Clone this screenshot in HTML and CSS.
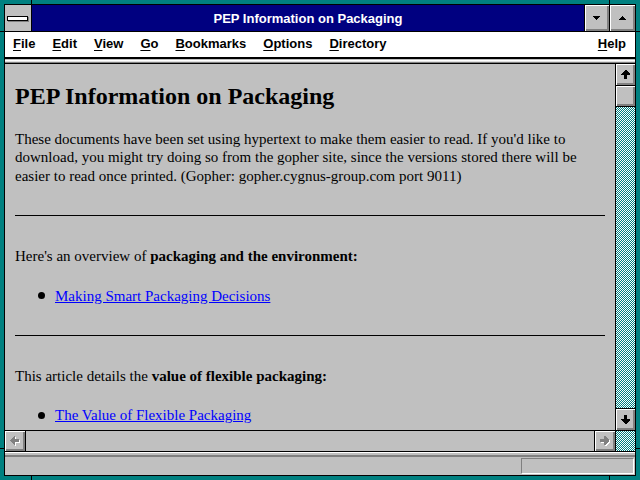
FILE: index.html
```html
<!DOCTYPE html>
<html>
<head>
<meta charset="utf-8">
<title>PEP Information on Packaging</title>
<link rel="stylesheet" href="styles.css">
</head>
<body>
<div class="window">
  <div class="titlebar">
    <div class="sysmenu"><span class="sysbar"></span></div>
    <div class="caption">PEP Information on Packaging</div>
    <div class="tbtn">
      <svg width="7" height="4" viewBox="0 0 7 4" shape-rendering="crispEdges"><polygon points="0,0 7,0 4,4 3,4" fill="#000"/></svg>
    </div>
    <div class="tbtn wide">
      <svg width="7" height="4" viewBox="0 0 7 4" shape-rendering="crispEdges"><polygon points="3,0 4,0 7,4 0,4" fill="#000"/></svg>
    </div>
  </div>
  <div class="menubar">
    <span class="mi"><u>F</u>ile</span>
    <span class="mi"><u>E</u>dit</span>
    <span class="mi"><u>V</u>iew</span>
    <span class="mi"><u>G</u>o</span>
    <span class="mi"><u>B</u>ookmarks</span>
    <span class="mi"><u>O</u>ptions</span>
    <span class="mi"><u>D</u>irectory</span>
    <span class="mi help"><u>H</u>elp</span>
  </div>
  <div class="strip"></div>
  <div class="main">
    <div class="leftcol">
      <div class="doc">
        <h1>PEP Information on Packaging</h1>
        <p class="intro">These documents have been set using hypertext to make them easier to read. If you'd like to download, you might try doing so from the gopher site, since the versions stored there will be easier to read once printed. (Gopher: gopher.cygnus-group.com port 9011)</p>
        <hr>
        <p class="lead">Here's an overview of <b>packaging and the environment:</b></p>
        <ul><li><a href="#">Making Smart Packaging Decisions</a></li></ul>
        <hr>
        <p class="lead">This article details the <b>value of flexible packaging:</b></p>
        <ul><li><a href="#">The Value of Flexible Packaging</a></li></ul>
      </div>
      <div class="hscroll">
        <div class="sbtn hleft">
          <svg width="10" height="10" viewBox="0 0 10 10" shape-rendering="crispEdges"><polygon points="1,5 5,1 6,1 6,4 10,4 10,7 6,7 6,10 5,10 1,6" fill="#fff"/><polygon points="0,4 4,0 5,0 5,3 9,3 9,6 5,6 5,9 4,9 0,5" fill="#808080"/></svg>
        </div>
        <div class="htrough"></div>
        <div class="sbtn hright">
          <svg width="10" height="10" viewBox="0 0 10 10" shape-rendering="crispEdges"><polygon points="10,5 6,1 5,1 5,4 1,4 1,7 5,7 5,10 6,10 10,6" fill="#fff"/><polygon points="9,4 5,0 4,0 4,3 0,3 0,6 4,6 4,9 5,9 9,5" fill="#808080"/></svg>
        </div>
      </div>
    </div>
    <div class="vscroll">
      <div class="sbtn vup">
        <svg width="9" height="9" viewBox="0 0 9 9" shape-rendering="crispEdges"><polygon points="4,0 5,0 9,4 9,5 6,5 6,9 3,9 3,5 0,5 0,4" fill="#000"/></svg>
      </div>
      <div class="thumb"></div>
      <div class="vtrough"></div>
      <div class="sbtn vdown">
        <svg width="9" height="9" viewBox="0 0 9 9" shape-rendering="crispEdges"><polygon points="4,9 5,9 9,5 9,4 6,4 6,0 3,0 3,4 0,4 0,5" fill="#000"/></svg>
      </div>
      <div class="corner"></div>
    </div>
  </div>
  <div class="statusstrip"></div>
  <div class="statusbar">
    <div class="statusbox"></div>
  </div>
</div>
</body>
</html>
```
FILE: styles.css
```css
* { box-sizing: border-box; }
html, body { margin: 0; }
body {
  width: 640px;
  height: 480px;
  padding: 4px;
  overflow: hidden;
  background-color: #008080;
  background-image:
    linear-gradient(#000, #000),
    linear-gradient(#000, #000),
    linear-gradient(#000, #000),
    linear-gradient(#000, #000);
  background-size: 1px 100%, 1px 100%, 100% 1px, 100% 1px;
  background-position: 31px 0, 609px 0, 0 31px, 0 448px;
  background-repeat: no-repeat;
}
.window {
  width: 632px;
  height: 472px;
  border: 1px solid #000;
  background: #c0c0c0;
  display: flex;
  flex-direction: column;
}
.titlebar {
  height: 27px;
  display: flex;
  border-bottom: 1px solid #000;
  flex: none;
}
.sysmenu {
  width: 27px;
  background: #c0c0c0;
  border-right: 1px solid #000;
  display: flex;
  align-items: center;
  justify-content: center;
  padding-bottom: 1px;
}
.sysbar {
  display: block;
  width: 21px;
  height: 5px;
  margin: 2px 1px 0 0;
  background: #fff;
  border: 1px solid #000;
  box-shadow: 1px 1px 0 #808080;
}
.caption {
  flex: 1;
  background: #000080;
  color: #fff;
  font: bold 13px "Liberation Sans", Arial, sans-serif;
  display: flex;
  align-items: center;
  justify-content: center;
  padding-top: 1px;
}
.tbtn {
  width: 25px;
  border-left: 1px solid #000;
  background: #c0c0c0;
  box-shadow: inset 1px 1px 0 #fff, inset -1px -1px 0 #808080, inset -2px -2px 0 #808080;
  display: flex;
  align-items: center;
  justify-content: center;
  padding: 0 1px 1px 0;
}
.tbtn.wide { width: 26px; }
.tbtn svg { display: block; }
.menubar {
  height: 27px;
  background: #fff;
  border-bottom: 2px solid #000;
  display: flex;
  align-items: center;
  gap: 17px;
  padding: 0 9px 2px 8px;
  font: bold 13px "Liberation Sans", Arial, sans-serif;
  color: #000;
  flex: none;
}
.mi u { text-decoration-thickness: 1px; text-underline-offset: 2px; }
.help { margin-left: auto; }
.strip {
  height: 5px;
  flex: none;
  background: linear-gradient(#c0c0c0 0 1px, #fff 1px 2px, #dfdfdf 2px 3px, #808080 3px 4px, #000 4px 5px);
}
.main {
  height: 387px;
  display: flex;
  flex: none;
}
.leftcol {
  width: 610px;
  display: flex;
  flex-direction: column;
}
.doc {
  height: 366px;
  overflow: hidden;
  padding: 18px 10px 0 10px;
  background: #c0c0c0;
  color: #000;
  font-family: "Liberation Serif", "Times New Roman", serif;
  font-size: 15px;
  line-height: 18.4px;
}
.doc h1 {
  font-size: 24px;
  font-weight: bold;
  line-height: 28px;
  margin: 0 0 20px;
}
.doc p { margin: 0; }
.doc .intro { margin-bottom: 30px; }
.doc .lead { margin-bottom: 21px; }
.doc hr {
  border: 0;
  border-top: 1px solid #000;
  height: 0;
  margin: 0 0 31px;
}
.doc ul {
  list-style: none;
  margin: 0 0 30px;
  padding: 0 0 0 23px;
}
.doc li {
  display: flex;
  align-items: center;
}
.doc li::before {
  content: "";
  width: 7px;
  height: 7px;
  border-radius: 50%;
  background: #000;
  margin-right: 10px;
  flex: none;
}
.doc a { color: #0000ff; text-decoration: underline; }
.hscroll {
  height: 21px;
  border-top: 1px solid #000;
  display: flex;
}
.sbtn {
  background: #c0c0c0;
  box-shadow: inset 1px 1px 0 #fff, inset -1px -1px 0 #808080, inset -2px -2px 0 #808080;
  display: flex;
  align-items: center;
  justify-content: center;
  padding: 0 1px 1px 0;
}
.sbtn svg { display: block; }
.hleft { width: 21px; border-right: 1px solid #000; }
.htrough { flex: 1; background: #c0c0c0; }
.hright { width: 21px; border-left: 1px solid #000; }
.vscroll {
  width: 20px;
  border-left: 1px solid #000;
  display: flex;
  flex-direction: column;
  background-image: conic-gradient(#008080 25%, #fff 0 50%, #008080 0 75%, #fff 0);
  background-size: 2px 2px;
}
.vup { height: 22px; border-bottom: 1px solid #000; }
.thumb {
  height: 21px;
  border-bottom: 1px solid #000;
  background: #c0c0c0;
  box-shadow: inset 1px 1px 0 #fff, inset -1px -1px 0 #808080, inset -2px -2px 0 #808080;
}
.vtrough { flex: 1; }
.vdown { height: 23px; border-top: 1px solid #000; border-bottom: 1px solid #000; }
.corner { height: 20px; }
.statusstrip {
  height: 6px;
  flex: none;
  background: linear-gradient(#000 0 1px, #fff 1px 2px, #c0c0c0 2px 4px, #808080 4px 6px);
}
.statusbar {
  flex: 1;
  display: flex;
  justify-content: flex-end;
  align-items: flex-start;
  padding: 1px 1px 0 0;
}
.statusbox {
  width: 113px;
  height: 16px;
  border-top: 1px solid #808080;
  border-left: 1px solid #808080;
  border-bottom: 1px solid #fff;
  border-right: 1px solid #fff;
}
```
